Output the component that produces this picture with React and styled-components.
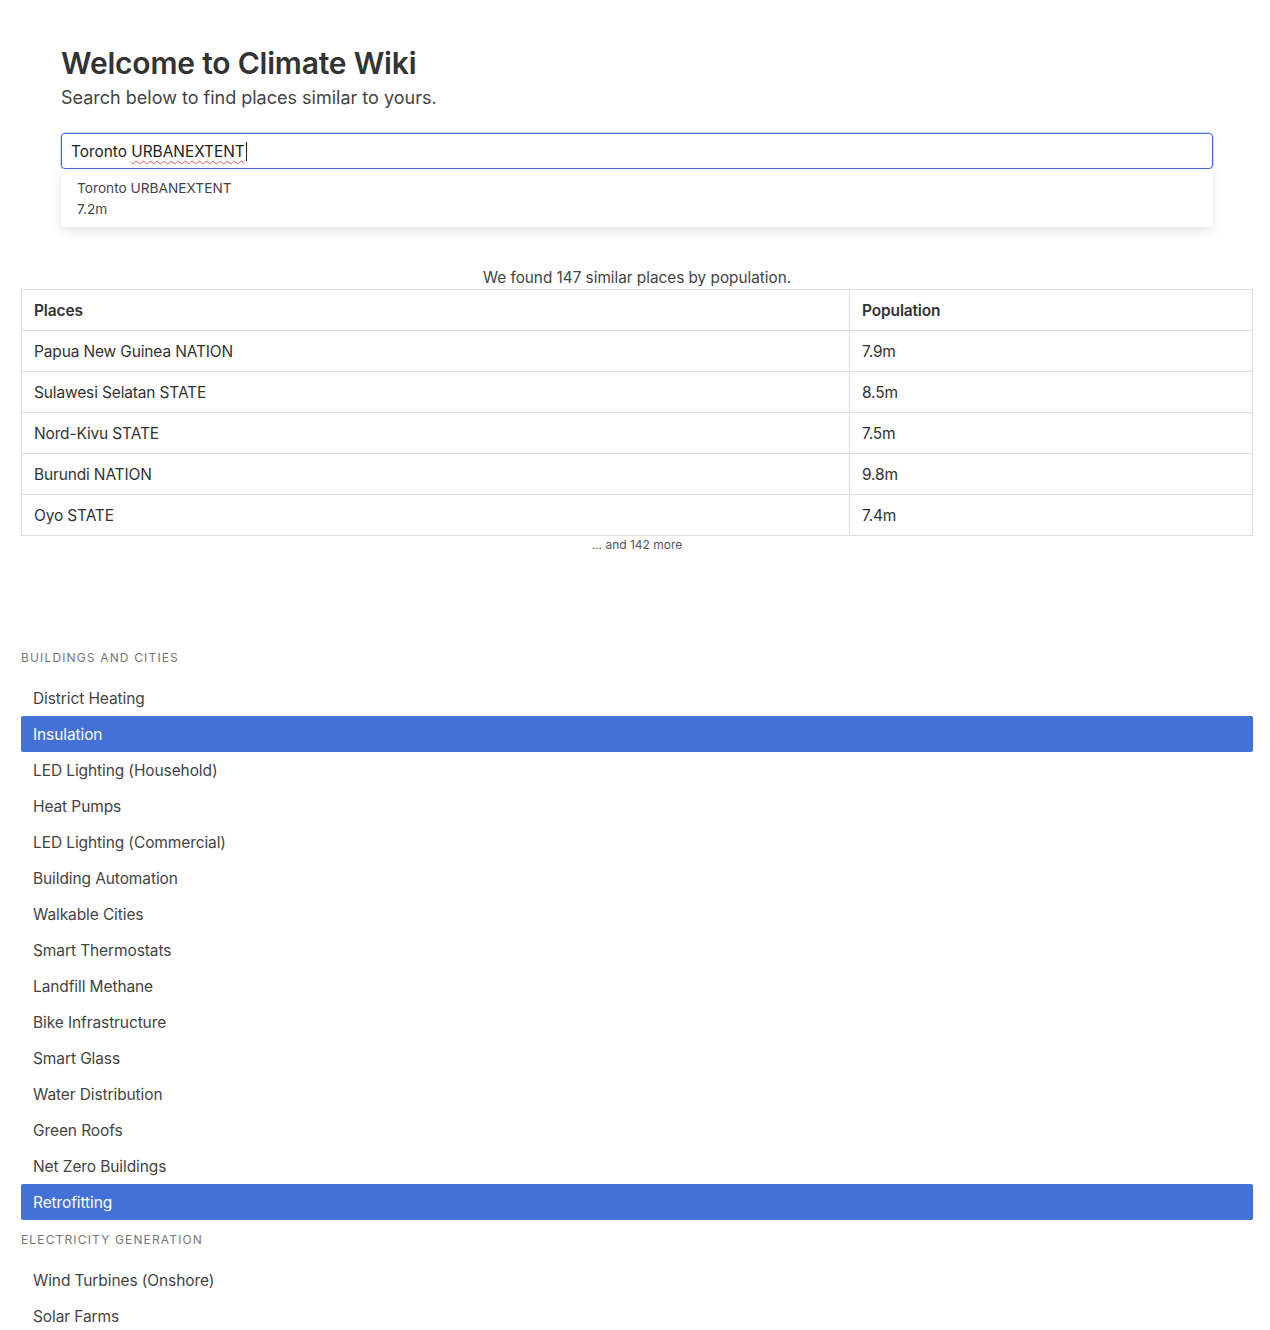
import React from "react";
import styled, { createGlobalStyle } from "styled-components";

const Global = createGlobalStyle`
  html, body { margin: 0; padding: 0; background: #fff; }
  body {
    font-family: Inter, "Noto Sans", "Liberation Sans", sans-serif;
    color: #333;
    -webkit-font-smoothing: antialiased;
  }
  * { box-sizing: border-box; }
`;

const Page = styled.div`
  padding: 0 17px 40px 21px;
`;

const Hero = styled.header`
  padding: 44px 40px 40px 40px;
`;

const Title = styled.h1`
  margin: 0 0 2px;
  font-size: 30px;
  font-weight: 600;
  line-height: 38px;
  color: #333;
  letter-spacing: -0.2px;
`;

const Subtitle = styled.p`
  margin: 0;
  font-size: 18px;
  line-height: 28px;
  color: #444;
`;

const SearchWrap = styled.div`
  position: relative;
  margin-top: 21px;
  height: 94px;
`;

const SearchInput = styled.div`
  height: 36px;
  border: 1px solid #3f6fd6;
  border-radius: 4px;
  box-shadow: 0 0 0 1px rgba(63, 111, 214, 0.25);
  padding: 0 9px;
  display: flex;
  align-items: center;
  font-size: 15.4px;
  color: #222;
`;

const Squiggle = styled.span`
  text-decoration: underline wavy #e05555;
  text-decoration-thickness: 1px;
  text-underline-offset: 3px;
`;

const Caret = styled.span`
  display: inline-block;
  width: 1px;
  height: 19px;
  background: #222;
  margin-left: 1px;
`;

const Dropdown = styled.div`
  position: absolute;
  left: 0;
  right: 0;
  top: 36px;
  padding: 9px 16px 7px;
  background: #fff;
  border-radius: 0 0 4px 4px;
  box-shadow: 0 4px 12px rgba(0, 0, 0, 0.1);
`;

const DropLine = styled.div`
  font-size: 13.7px;
  line-height: 21px;
  color: #444;
`;

const ResultNote = styled.p`
  margin: 1px 0 1px;
  text-align: center;
  font-size: 15.3px;
  line-height: 20px;
  color: #444;
`;

const Table = styled.table`
  width: 100%;
  border-collapse: collapse;
  font-size: 15.5px;
  letter-spacing: -0.15px;
`;

const Th = styled.th`
  text-align: left;
  font-weight: 600;
  border: 1px solid #ddd;
  padding: 0 12px;
  height: 41px;
  color: #333;
  width: ${(p) => p.$w || "auto"};
`;

const Td = styled.td`
  border: 1px solid #ddd;
  padding: 0 12px;
  height: 41px;
  color: #333;
`;

const More = styled.p`
  margin: 1px 0 0;
  text-align: center;
  font-size: 12px;
  line-height: 16px;
  color: #555;
`;

const Sections = styled.div`
  margin-top: 85px;
`;

const SectionTitle = styled.div`
  padding: 12px 0 14px;
  font-size: 12px;
  line-height: 16px;
  letter-spacing: 1.15px;
  text-transform: uppercase;
  color: #777;
`;

const Item = styled.div`
  height: 36px;
  display: flex;
  align-items: center;
  padding: 0 12px;
  font-size: 15.5px;
  letter-spacing: -0.1px;
  border-radius: 2px;
  color: ${(p) => (p.$active ? "#fff" : "#444")};
  background: ${(p) => (p.$active ? "#4371d8" : "transparent")};
`;

const places = [
  ["Papua New Guinea NATION", "7.9m"],
  ["Sulawesi Selatan STATE", "8.5m"],
  ["Nord-Kivu STATE", "7.5m"],
  ["Burundi NATION", "9.8m"],
  ["Oyo STATE", "7.4m"],
];

const sections = [
  {
    title: "Buildings and Cities",
    items: [
      ["District Heating"],
      ["Insulation", true],
      ["LED Lighting (Household)"],
      ["Heat Pumps"],
      ["LED Lighting (Commercial)"],
      ["Building Automation"],
      ["Walkable Cities"],
      ["Smart Thermostats"],
      ["Landfill Methane"],
      ["Bike Infrastructure"],
      ["Smart Glass"],
      ["Water Distribution"],
      ["Green Roofs"],
      ["Net Zero Buildings"],
      ["Retrofitting", true],
    ],
  },
  {
    title: "Electricity Generation",
    items: [["Wind Turbines (Onshore)"], ["Solar Farms"]],
  },
];

export default function App() {
  return (
    <>
      <Global />
      <Page>
        <Hero>
          <Title>Welcome to Climate Wiki</Title>
          <Subtitle>Search below to find places similar to yours.</Subtitle>
          <SearchWrap>
            <SearchInput>
              Toronto&nbsp;<Squiggle>URBANEXTENT</Squiggle>
              <Caret />
            </SearchInput>
            <Dropdown>
              <DropLine>Toronto URBANEXTENT</DropLine>
              <DropLine>7.2m</DropLine>
            </Dropdown>
          </SearchWrap>
        </Hero>
        <ResultNote>We found 147 similar places by population.</ResultNote>
        <Table>
          <thead>
            <tr>
              <Th $w="828px">Places</Th>
              <Th>Population</Th>
            </tr>
          </thead>
          <tbody>
            {places.map(([n, p]) => (
              <tr key={n}>
                <Td>{n}</Td>
                <Td>{p}</Td>
              </tr>
            ))}
          </tbody>
        </Table>
        <More>... and 142 more</More>
        <Sections>
          {sections.map((s) => (
            <div key={s.title}>
              <SectionTitle>{s.title}</SectionTitle>
              {s.items.map(([name, active]) => (
                <Item key={name} $active={active}>
                  {name}
                </Item>
              ))}
            </div>
          ))}
        </Sections>
      </Page>
    </>
  );
}
